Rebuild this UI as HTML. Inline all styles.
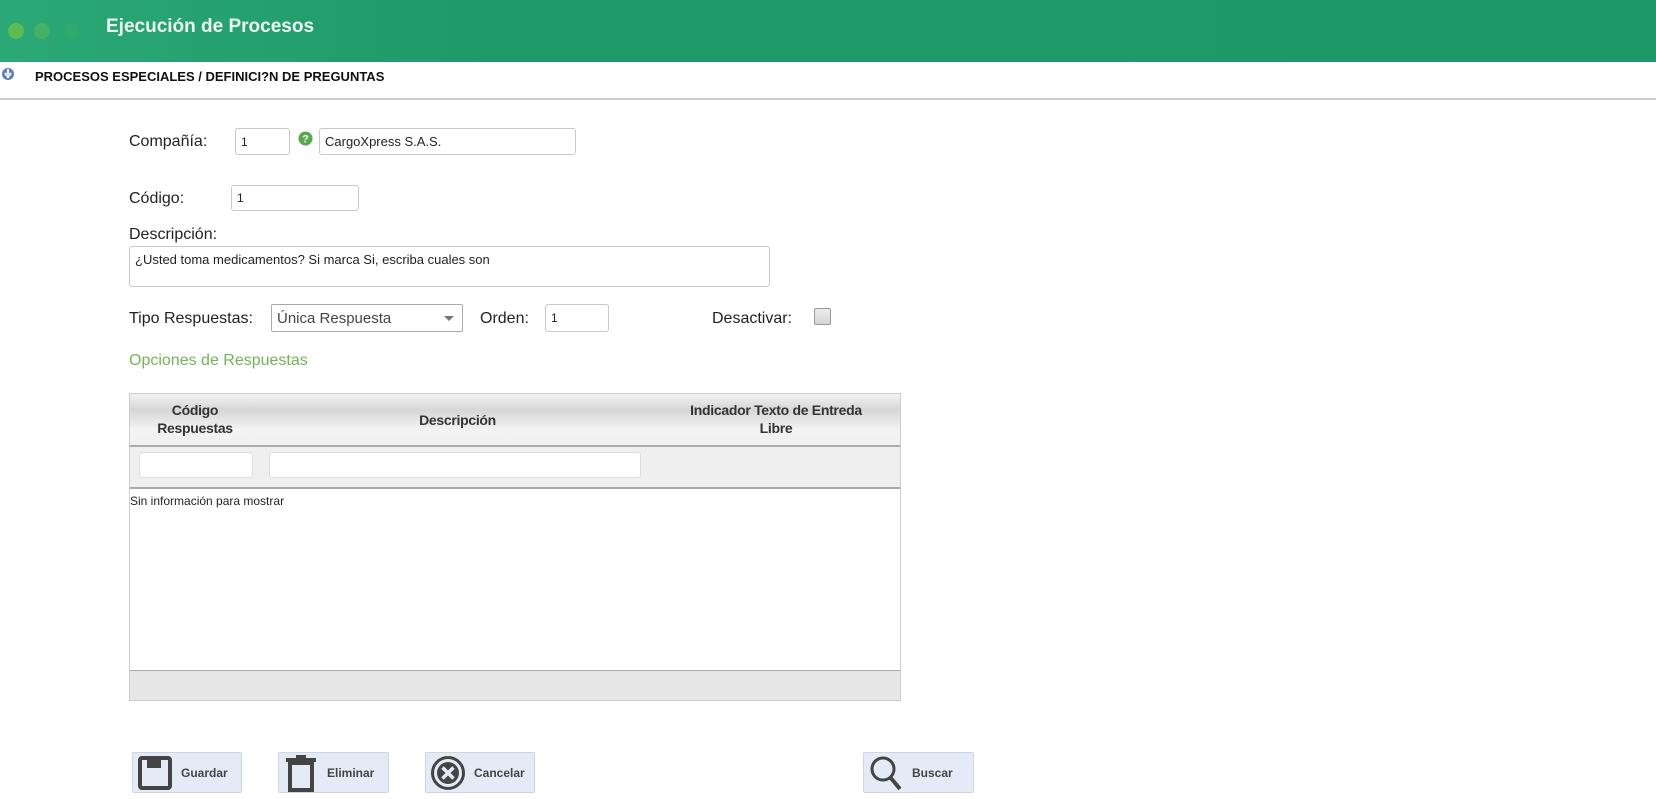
<!DOCTYPE html>
<html><head><meta charset="utf-8"><style>
*{box-sizing:border-box;margin:0;padding:0}
body{width:1656px;height:799px;position:relative;background:#fff;font-family:"Liberation Sans",sans-serif;color:#222;overflow:hidden}
.a{position:absolute}
.hdr{left:0;top:0;width:1656px;height:62px;background:linear-gradient(90deg,#2aa876 0%,#1e9a68 30%,#1d9867 100%)}
.dot{width:16px;height:16px;border-radius:50%;top:23px}
.lbl{font-size:16px;color:#222}
.in{border:1px solid #c9c9c9;border-radius:3px;background:#fff;font-size:12px;padding:0 5px;display:flex;align-items:center}
.th{font-weight:bold;font-size:14px;color:#333;text-align:center;line-height:18px;letter-spacing:-0.3px}
.btn{top:752px;height:41px;background:#e4ebf7;border:1px solid #cfd6e3;border-radius:2px;display:flex;align-items:center;font-size:12px;font-weight:bold;color:#444}
.btn svg{margin-left:4px;margin-right:8px}
</style></head><body>
<div class="a hdr"></div>
<div class="a dot" style="left:8px;background:#6cbf4e;opacity:.8"></div>
<div class="a dot" style="left:34px;background:#5ab85a;opacity:.6"></div>
<div class="a dot" style="left:64px;background:#3aaa68;opacity:.5"></div>
<div class="a" style="left:106px;top:16px;font-size:19px;font-weight:bold;color:#eef8f2">Ejecución de Procesos</div>
<svg class="a" style="left:1px;top:67px" width="14" height="14" viewBox="0 0 14 14"><circle cx="7" cy="7" r="6" fill="#5b7fb8"/><path d="M4 6l3 4 3-4" stroke="#fff" stroke-width="2" fill="none"/><rect x="6" y="2" width="2" height="5" fill="#fff"/></svg>
<div class="a" style="left:35px;top:69px;font-size:13px;font-weight:bold;color:#111">PROCESOS ESPECIALES / DEFINICI?N DE PREGUNTAS</div>
<div class="a" style="left:0;top:98px;width:1656px;height:2px;background:#ccc"></div>

<div class="a lbl" style="left:129px;top:133px">Compañía:</div>
<div class="a in" style="left:235px;top:128px;width:55px;height:27px">1</div>
<svg class="a" style="left:298px;top:131px" width="15" height="15"><circle cx="7.5" cy="7.5" r="7" fill="#59a84c"/><text x="7.5" y="11.5" font-size="11" font-weight="bold" fill="#fff" text-anchor="middle" font-family="Liberation Sans">?</text></svg>
<div class="a in" style="left:319px;top:128px;width:257px;height:27px;font-size:13px">CargoXpress S.A.S.</div>

<div class="a lbl" style="left:129px;top:190px">Código:</div>
<div class="a in" style="left:231px;top:185px;width:128px;height:26px">1</div>

<div class="a lbl" style="left:129px;top:226px">Descripción:</div>
<div class="a in" style="left:129px;top:246px;width:641px;height:41px;align-items:flex-start;padding-top:5px;font-size:13px">¿Usted toma medicamentos? Si marca Si, escriba cuales son</div>

<div class="a lbl" style="left:129px;top:310px">Tipo Respuestas:</div>
<div class="a in" style="left:271px;top:304px;width:192px;height:28px;border-color:#aaa;border-radius:2px;font-size:15px;color:#444">Única Respuesta<span style="position:absolute;right:8px;top:11px;border:5px solid transparent;border-top:5px solid #777"></span></div>
<div class="a lbl" style="left:480px;top:310px">Orden:</div>
<div class="a in" style="left:545px;top:304px;width:64px;height:28px">1</div>
<div class="a lbl" style="left:712px;top:310px">Desactivar:</div>
<div class="a" style="left:814px;top:308px;width:17px;height:17px;border:1px solid #999;background:linear-gradient(#ececec,#d5d5d5);border-radius:2px"></div>

<div class="a" style="left:129px;top:352px;font-size:16px;color:#72b556">Opciones de Respuestas</div>

<div class="a" style="left:129px;top:393px;width:772px;height:308px;border:1px solid #ccc"></div>
<div class="a" style="left:130px;top:394px;width:770px;height:51px;background:linear-gradient(#f4f4f4,#d6d6d6 30%,#f3f3f3 70%,#f0f0f0)"></div>
<div class="a th" style="left:130px;top:401px;width:130px">Código<br>Respuestas</div>
<div class="a th" style="left:260px;top:411px;width:395px">Descripción</div>
<div class="a th" style="left:660px;top:401px;width:232px">Indicador Texto de Entreda<br>Libre</div>
<div class="a" style="left:130px;top:445px;width:770px;height:2px;background:#aaa"></div>
<div class="a" style="left:130px;top:447px;width:770px;height:41px;background:#efefef"></div>
<div class="a in" style="left:139px;top:452px;width:114px;height:26px;border-color:#ddd"></div>
<div class="a in" style="left:269px;top:452px;width:372px;height:26px;border-color:#ddd"></div>
<div class="a" style="left:130px;top:487px;width:770px;height:2px;background:#aaa"></div>
<div class="a" style="left:130px;top:494px;font-size:12px;color:#222">Sin información para mostrar</div>
<div class="a" style="left:130px;top:670px;width:770px;height:30px;background:#e7e7e7;border-top:1px solid #aaa"></div>

<div class="a btn" style="left:132px;width:110px"><svg width="36" height="36" viewBox="0 0 36 36"><rect x="3" y="3" width="30" height="30" rx="2" fill="none" stroke="#444" stroke-width="4"/><rect x="10" y="3" width="14" height="10" fill="#444"/></svg>Guardar</div>
<div class="a btn" style="left:278px;width:111px"><svg width="36" height="38" viewBox="0 0 36 38"><rect x="3" y="4" width="30" height="4" fill="#444"/><rect x="13" y="1" width="10" height="4" fill="#444"/><rect x="7" y="9" width="22" height="27" fill="none" stroke="#444" stroke-width="4"/></svg>Eliminar</div>
<div class="a btn" style="left:425px;width:110px"><svg width="36" height="36" viewBox="0 0 36 36"><circle cx="18" cy="18" r="15.5" fill="none" stroke="#444" stroke-width="3"/><circle cx="18" cy="18" r="11" fill="#444"/><path d="M12.5 12.5l11 11M23.5 12.5l-11 11" stroke="#e4ebf7" stroke-width="3.5"/></svg>Cancelar</div>
<div class="a btn" style="left:863px;width:111px"><svg width="36" height="38" viewBox="0 0 36 38"><circle cx="15" cy="15" r="11" fill="none" stroke="#444" stroke-width="3"/><path d="M22 23l10 12" stroke="#444" stroke-width="4"/></svg>Buscar</div>
</body></html>
